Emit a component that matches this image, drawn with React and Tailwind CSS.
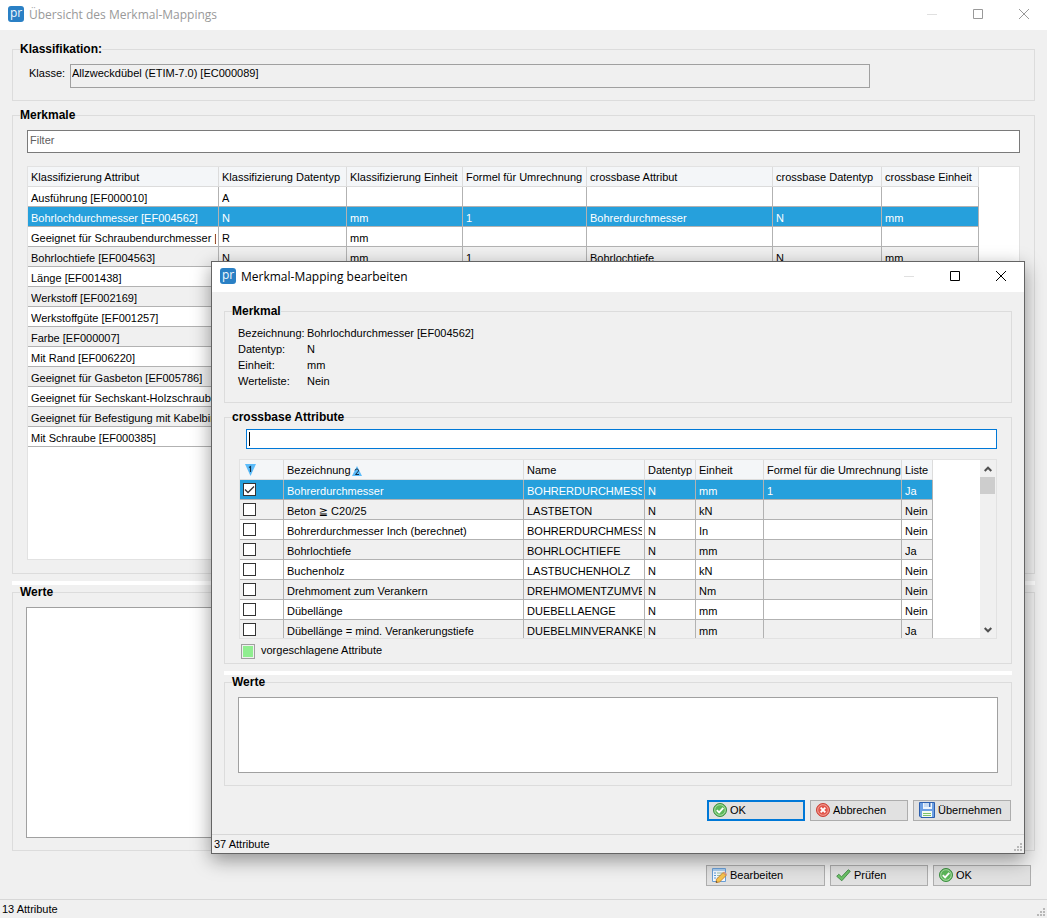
import { useState } from "react";

const attributes = [
  ["Ausführung [EF000010]", "A", "", "", "", "", ""],
  ["Bohrlochdurchmesser [EF004562]", "N", "mm", "1", "Bohrerdurchmesser", "N", "mm"],
  ["Geeignet für Schraubendurchmesser [", "R", "mm", "", "", "", ""],
  ["Bohrlochtiefe [EF004563]", "N", "mm", "1", "Bohrlochtiefe", "N", "mm"],
  ["Länge [EF001438]", "", "", "", "", "", ""],
  ["Werkstoff [EF002169]", "", "", "", "", "", ""],
  ["Werkstoffgüte [EF001257]", "", "", "", "", "", ""],
  ["Farbe [EF000007]", "", "", "", "", "", ""],
  ["Mit Rand [EF006220]", "", "", "", "", "", ""],
  ["Geeignet für Gasbeton [EF005786]", "", "", "", "", "", ""],
  ["Geeignet für Sechskant-Holzschraube", "", "", "", "", "", ""],
  ["Geeignet für Befestigung mit Kabelbin", "", "", "", "", "", ""],
  ["Mit Schraube [EF000385]", "", "", "", "", "", ""],
];

const attributeColumns = [
  { label: "Klassifizierung Attribut", width: "w-[191px]" },
  { label: "Klassifizierung Datentyp", width: "w-[128px]" },
  { label: "Klassifizierung Einheit", width: "w-[116px]" },
  { label: "Formel für Umrechnung", width: "w-[124px]" },
  { label: "crossbase Attribut", width: "w-[186px]" },
  { label: "crossbase Datentyp", width: "w-[109px]" },
  { label: "crossbase Einheit", width: "w-[97px]" },
];

const crossbase = [
  ["Bohrerdurchmesser", "BOHRERDURCHMESSER", "N", "mm", "1", "Ja"],
  ["Beton ≧ C20/25", "LASTBETON", "N", "kN", "", "Nein"],
  ["Bohrerdurchmesser Inch (berechnet)", "BOHRERDURCHMESSER", "N", "In", "", "Nein"],
  ["Bohrlochtiefe", "BOHRLOCHTIEFE", "N", "mm", "", "Ja"],
  ["Buchenholz", "LASTBUCHENHOLZ", "N", "kN", "", "Nein"],
  ["Drehmoment zum Verankern", "DREHMOMENTZUMVERA", "N", "Nm", "", "Nein"],
  ["Dübellänge", "DUEBELLAENGE", "N", "mm", "", "Nein"],
  ["Dübellänge = mind. Verankerungstiefe", "DUEBELMINVERANKERU", "N", "mm", "", "Ja"],
];

const crossbaseColumns = [
  { label: "Bezeichnung", width: "w-[240px]", icon: <SortUp /> },
  { label: "Name", width: "w-[121px]" },
  { label: "Datentyp", width: "w-[51px]" },
  { label: "Einheit", width: "w-[68px]" },
  { label: "Formel für die Umrechnung", width: "w-[138px]" },
  { label: "Liste", width: "w-[31px]" },
];

const features = [
  ["Bezeichnung:", "Bohrlochdurchmesser [EF004562]"],
  ["Datentyp:", "N"],
  ["Einheit:", "mm"],
  ["Werteliste:", "Nein"],
];

/* ---------- icons ---------- */

function Logo() {
  return (
    <svg width="16" height="16" viewBox="0 0 16 16" className="shrink-0">
      <rect width="16" height="16" rx="3" fill="#2a80c5" />
      <text
        x="8"
        y="11"
        textAnchor="middle"
        fontSize="12"
        fontWeight="500"
        fontFamily="Open Sans, sans-serif"
        fill="#f2f8fd"
      >
        pr
      </text>
    </svg>
  );
}

function SortDown() {
  return (
    <svg width="11" height="12" viewBox="0 0 11 12">
      <path d="M0 0h11L5.500 12z" fill="#5cbcfa" />
      <path d="M4 3.500L5.500 2.500V8" fill="none" stroke="#12304a" strokeWidth="1.200" />
    </svg>
  );
}

function SortUp() {
  return (
    <svg width="10" height="10" viewBox="0 0 10 10" className="ml-px inline-block align-[-2px]">
      <path d="M5 0l5 10H0z" fill="#5cbcfa" />
      <path d="M3 4.500C3 2.500 7 2.500 6.500 5L3.500 8.500H7" fill="none" stroke="#12304a" />
    </svg>
  );
}

function OkIcon() {
  return (
    <svg width="14" height="14" viewBox="0 0 14 14">
      <circle cx="7" cy="7" r="6.500" fill="#5cb85a" stroke="#3c8f41" />
      <circle cx="7" cy="7" r="5.300" fill="none" stroke="#bfe6b8" strokeWidth="0.800" />
      <path d="M3.800 7.200l2.300 2.200 4.200-4.600" fill="none" stroke="#fff" strokeWidth="1.800" />
    </svg>
  );
}

function CancelIcon() {
  return (
    <svg width="14" height="14" viewBox="0 0 14 14">
      <circle cx="7" cy="7" r="6.500" fill="#e2574c" stroke="#cb4237" />
      <circle cx="7" cy="7" r="5.300" fill="none" stroke="#f6b5ab" strokeWidth="0.800" />
      <path d="M4.700 4.700l4.600 4.600M9.300 4.700L4.700 9.300" stroke="#fff" strokeWidth="1.900" />
    </svg>
  );
}

function SaveIcon() {
  return (
    <svg width="16" height="16" viewBox="0 0 16 16">
      <path d="M.5.500h15v15H2L.5 14z" fill="#6c9fe3" stroke="#2c5fae" />
      <path d="M4 1h9v6H4z" fill="#eef5fc" />
      <path d="M5 1h5v4H5z" fill="#c8dcf3" />
      <path d="M10 1h1.500v4H10z" fill="#3c6cb6" />
      <path d="M3 9h10v6H3z" fill="#f4faf2" />
      <path d="M4 11.500h8M4 13.500h8" stroke="#7cc269" />
    </svg>
  );
}

function CheckIcon() {
  return (
    <svg width="15" height="13" viewBox="0 0 15 13">
      <path
        d="M.7 7.300L2.800 5.200l2.700 2.600L12.300.700l2 1.500-8.500 9.600z"
        fill="#6cc267"
        stroke="#35803b"
        strokeWidth="0.800"
        strokeLinejoin="round"
      />
    </svg>
  );
}

function EditIcon() {
  return (
    <svg width="15" height="15" viewBox="0 0 15 15">
      <path d="M.5.500h13v13H.5z" fill="#f3f9ff" stroke="#6a9fd6" />
      <path d="M1 1h12v2H1z" fill="#a9cdf0" />
      <path d="M2 5h2M2 7.500h2M2 10h2" stroke="#5e9bd8" />
      <path d="M5 5h7M5 7.500h5M5 10h3" stroke="#9fc0a4" />
      <path d="M4.500 11.200L11 4.500l3.300 2.800-6.600 6.600-3.700.700z" fill="#f6c34c" stroke="#b9762b" strokeWidth="0.800" />
      <path d="M11 4.500l1.200-1 3 2.700-.9 1.100z" fill="#e79a84" />
      <path d="M4 14.600l.3-1.500 1.200 1.200z" fill="#333" />
    </svg>
  );
}

function Chevron({ up }) {
  return (
    <svg width="8" height="6" viewBox="0 0 8 6" className={up ? "" : "rotate-180"}>
      <path d="M.7 5L4 1.700 7.300 5" fill="none" stroke="#505050" strokeWidth="2" />
    </svg>
  );
}

function Grip() {
  return (
    <svg width="8" height="8" viewBox="0 0 8 8" fill="#b8b8b8">
      <path d="M6 0h2v2H6zM3 3h2v2H3zM6 3h2v2H6zM0 6h2v2H0zM3 6h2v2H3zM6 6h2v2H6z" />
    </svg>
  );
}

/* ---------- window parts ---------- */

function TitleBar({ title, active }) {
  return (
    <header
      className={`flex h-[30px] shrink-0 items-center bg-white pb-[2px] pl-2 ${active ? "text-black" : "text-[#999999]"}`}
    >
      <Logo />
      <h1 className="ml-[5px] flex-1 pt-px font-['Open_Sans',sans-serif] text-xs">{title}</h1>
      <button aria-label="Minimieren" className="grid h-full w-[46px] place-items-center text-[#e0e0e0]">
        <svg width="10" height="10" stroke="currentColor">
          <path d="M0 5.500h10" />
        </svg>
      </button>
      <button aria-label="Maximieren" className="grid h-full w-[46px] place-items-center">
        <svg width="10" height="10" fill="none" stroke="currentColor">
          <path d="M.5.500h9v9h-9z" />
        </svg>
      </button>
      <button aria-label="Schließen" className="grid h-full w-[46px] place-items-center">
        <svg width="10" height="10" fill="none" stroke="currentColor">
          <path d="M0 0l10 10M10 0L0 10" />
        </svg>
      </button>
    </header>
  );
}

function Group({ title, className = "", bodyClass, children }) {
  return (
    <fieldset className={`min-w-0 border border-[#dcdcdc] ${className}`}>
      <legend className="ml-[7px] text-xs leading-[15px] font-bold">{title}</legend>
      <div className={bodyClass}>{children}</div>
    </fieldset>
  );
}

function Splitter() {
  return <div className="mt-[7px] h-1 shrink-0 bg-white" />;
}

function ToolButton({ icon, primary, wide, children }) {
  return (
    <button
      className={`flex h-[21px] items-center bg-[#e1e1e1] pb-px ${wide ? "w-[119px]" : "w-[98px]"} ${
        primary ? "border-2 border-[#0078d7] pl-1" : "border border-[#adadad] pl-[5px]"
      }`}
    >
      {icon}
      <span className="pl-[3px]">{children}</span>
    </button>
  );
}

function StatusBar({ children }) {
  return (
    <footer className="mt-[13px] flex h-[19px] shrink-0 items-center justify-between border-t border-[#d7d7d7] pl-[2px]">
      <span>{children}</span>
      <span className="self-end pr-[2px] pb-[2px]">
        <Grip />
      </span>
    </footer>
  );
}

function HeadCell({ width, children }) {
  return (
    <th
      className={`h-5 overflow-hidden border-r border-b border-[#dcdcdc] bg-[#f4f6f8] pt-[2px] pl-[3px] text-left align-top leading-4 font-normal whitespace-nowrap ${width}`}
    >
      {children}
    </th>
  );
}

function Cell({ children }) {
  return (
    <td className="h-5 border-r border-b border-[#b2b2b2] pt-[3px] pr-[2px] pl-[3px] leading-4">
      <div className="h-4 overflow-hidden whitespace-nowrap">{children}</div>
    </td>
  );
}

function MappingDialog() {
  const [checked, setChecked] = useState({ 0: true });
  const [selected, setSelected] = useState(0);

  const toggle = (index) => {
    setChecked((prev) => ({ ...prev, [index]: !prev[index] }));
  };

  return (
    <div
      role="dialog"
      aria-label="Merkmal-Mapping bearbeiten"
      className="absolute top-[261px] left-[211px] flex w-[814px] flex-col border border-[#646464] bg-[#f0f0f0] shadow-[0_6px_18px_rgba(0,0,0,0.4)]"
    >
      <TitleBar title="Merkmal-Mapping bearbeiten" active />
      <div className="flex flex-col px-3 pt-3">
        <Group title="Merkmal" bodyClass="pt-[6px] pb-[13px] pl-[13px]">
          <dl className="grid grid-cols-[69px_1fr] leading-4">
            {features.map(([name, value]) => (
              <div key={name} className="contents">
                <dt>{name}</dt>
                <dd>{value}</dd>
              </div>
            ))}
          </dl>
        </Group>

        <Group title="crossbase Attribute" className="mt-[7px]" bodyClass="px-[14px] py-1">
          <div className="relative ml-[7px]">
            <input
              type="text"
              aria-label="crossbase Attribute filtern"
              className="block h-5 w-full border border-[#0078d7] bg-white px-[3px] caret-transparent outline-none"
            />
            <span className="absolute top-[3px] left-[3px] h-[14px] w-px bg-black" />
          </div>

          <div className="mt-[10px] flex h-[180px] justify-between overflow-hidden border border-[#e2e2e2] bg-white">
            <table className="w-[693px] table-fixed border-separate border-spacing-0 self-start">
              <thead>
                <tr>
                  <HeadCell width="w-[44px]">
                    <span className="block pt-[2px] pl-[2px]">
                      <SortDown />
                    </span>
                  </HeadCell>
                  {crossbaseColumns.map((column) => (
                    <HeadCell key={column.label} width={column.width}>
                      {column.label}
                      {column.icon}
                    </HeadCell>
                  ))}
                </tr>
              </thead>
              <tbody>
                {crossbase.map((row, index) => (
                  <tr
                    key={index}
                    onClick={() => setSelected(index)}
                    className={
                      selected === index ? "bg-[#26a0dc] text-white" : index % 2 ? "bg-[#f0f0f0]" : "bg-white"
                    }
                  >
                    <td className="h-5 border-r border-b border-[#b2b2b2] pt-[3px] pl-[3px] align-top">
                      <span className="relative block size-[13px]">
                        <input
                          type="checkbox"
                          aria-label={row[0]}
                          checked={!!checked[index]}
                          onChange={() => toggle(index)}
                          className="block size-[13px] appearance-none border border-[#333333] bg-white"
                        />
                        {checked[index] && (
                          <svg
                            width="13"
                            height="13"
                            viewBox="0 0 13 13"
                            className="pointer-events-none absolute inset-0"
                          >
                            <path d="M2 6.500l3 3L11 3.500" fill="none" stroke="#333" strokeWidth="1.300" />
                          </svg>
                        )}
                      </span>
                    </td>
                    {row.map((value, i) => (
                      <Cell key={i}>{value}</Cell>
                    ))}
                  </tr>
                ))}
              </tbody>
            </table>

            {/* Scrollbar */}
            <div className="flex w-4 flex-col bg-[#f0f0f0] pr-px">
              <button aria-label="Nach oben" className="grid h-[17px] place-items-center">
                <Chevron up />
              </button>
              <div className="h-[17px] bg-[#cdcdcd]" />
              <button aria-label="Nach unten" className="mt-auto grid h-[17px] place-items-center">
                <Chevron />
              </button>
            </div>
          </div>

          <div className="mt-[5px] ml-[2px] flex gap-[6px]">
            <span className="h-[15px] w-[14px] border border-[#a0a0a0] bg-[#90ee90] ring-1 ring-[#f0f0f0] ring-inset" />
            <span className="leading-[13px]">vorgeschlagene Attribute</span>
          </div>
        </Group>

        <Splitter />

        <Group title="Werte" bodyClass="px-[13px] pt-[7px] pb-3">
          <textarea
            aria-label="Werte"
            readOnly
            className="block h-[76px] w-full resize-none border border-[#a0a0a0] bg-white outline-none"
          />
        </Group>
      </div>

      <div className="mt-[14px] flex justify-end gap-[5px] pr-[13px]">
        <ToolButton icon={<OkIcon />} primary>
          OK
        </ToolButton>
        <ToolButton icon={<CancelIcon />}>Abbrechen</ToolButton>
        <ToolButton icon={<SaveIcon />}>Übernehmen</ToolButton>
      </div>
      <StatusBar>37 Attribute</StatusBar>
    </div>
  );
}

export default function App() {
  const [filter, setFilter] = useState("");
  const [selected, setSelected] = useState(1);

  return (
    <div className="relative flex min-h-screen flex-col overflow-hidden bg-[#f0f0f0] font-['Liberation_Sans','DejaVu_Sans',sans-serif] text-[11px] leading-4 text-black">
      <TitleBar title="Übersicht des Merkmal-Mappings" />

      <main className="flex flex-1 flex-col px-3 pt-3">
        <Group title="Klassifikation:" bodyClass="pt-[7px] pb-3 pl-4">
          <div className="flex gap-[5px]">
            <label htmlFor="klasse" className="w-9 pt-px whitespace-nowrap">
              Klasse:
            </label>
            <input
              id="klasse"
              type="text"
              readOnly
              value="Allzweckdübel (ETIM-7.0) [EC000089]"
              className="h-6 w-full max-w-[800px] border border-[#a0a0a0] bg-[#f0f0f0] px-px pb-[6px] outline-none"
            />
          </div>
        </Group>

        <Group title="Merkmale" className="mt-[7px] flex-1" bodyClass="px-[14px] pt-[7px] pb-[13px]">
          <input
            type="text"
            placeholder="Filter"
            aria-label="Filter"
            value={filter}
            onChange={(e) => setFilter(e.target.value)}
            className="block h-[23px] w-full border border-[#7a7a7a] bg-white px-[2px] pb-[3px] outline-none placeholder:text-[#606060]"
          />
          <div className="mt-[13px] min-h-[394px] overflow-hidden border border-[#e2e2e2] bg-white">
            <table className="w-[951px] table-fixed border-separate border-spacing-0">
              <thead>
                <tr>
                  {attributeColumns.map((column) => (
                    <HeadCell key={column.label} width={column.width}>
                      {column.label}
                    </HeadCell>
                  ))}
                </tr>
              </thead>
              <tbody>
                {attributes.map((row, index) => (
                  <tr
                    key={index}
                    onClick={() => setSelected(index)}
                    className={
                      selected === index ? "bg-[#26a0dc] text-white" : index % 2 ? "bg-[#f0f0f0]" : "bg-white"
                    }
                  >
                    {row.map((value, i) => (
                      <Cell key={i}>{value}</Cell>
                    ))}
                  </tr>
                ))}
              </tbody>
            </table>
          </div>
        </Group>

        <Splitter />

        <Group title="Werte" bodyClass="px-[13px] pt-[7px] pb-3">
          <textarea
            aria-label="Werte"
            readOnly
            className="block h-[231px] w-full resize-none border border-[#a0a0a0] bg-white outline-none"
          />
        </Group>
      </main>

      <div className="mt-[14px] flex justify-end gap-[5px] pr-4">
        <ToolButton icon={<EditIcon />} wide>
          Bearbeiten
        </ToolButton>
        <ToolButton icon={<CheckIcon />}>Prüfen</ToolButton>
        <ToolButton icon={<OkIcon />}>OK</ToolButton>
      </div>
      <StatusBar>13 Attribute</StatusBar>

      <MappingDialog />
    </div>
  );
}
